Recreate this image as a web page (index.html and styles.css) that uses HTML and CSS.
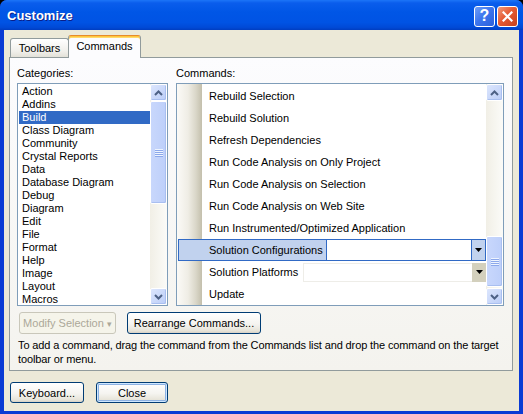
FILE: index.html
```html
<!DOCTYPE html>
<html lang="en">
<head>
  <meta charset="UTF-8">
  <title>Customize</title>
  <link rel="stylesheet" href="styles.css">
</head>
<body>
  <div class="window">
    <div class="titlebar">
      <span class="title">Customize</span>
      <div class="caption-buttons">
        <span class="cap-btn help">?</span>
        <span class="cap-btn close">
          <svg width="11" height="11" viewBox="0 0 11 11"><path d="M1.5 1.5 L9.5 9.5 M9.5 1.5 L1.5 9.5" stroke="#fff" stroke-width="2.2" stroke-linecap="square"/></svg>
        </span>
      </div>
    </div>

    <div class="client">
      <div class="tabs">
        <div class="tab">Toolbars</div>
        <div class="tab active">Commands</div>
      </div>

      <div class="panel">
        <div class="columns">
          <div class="col">
            <div class="label">Categories:</div>
            <div class="listbox">
              <ul class="cat-items">
                <li>Action</li>
                <li>Addins</li>
                <li class="selected">Build</li>
                <li>Class Diagram</li>
                <li>Community</li>
                <li>Crystal Reports</li>
                <li>Data</li>
                <li>Database Diagram</li>
                <li>Debug</li>
                <li>Diagram</li>
                <li>Edit</li>
                <li>File</li>
                <li>Format</li>
                <li>Help</li>
                <li>Image</li>
                <li>Layout</li>
                <li>Macros</li>
              </ul>
              <div class="scrollbar">
                <div class="sb-btn">
                  <svg width="9" height="6" viewBox="0 0 9 6"><path d="M1 5 L4.5 1.5 L8 5" fill="none" stroke="#4D6185" stroke-width="2"/></svg>
                </div>
                <div class="sb-thumb cat-thumb"><span class="grip"></span></div>
                <div class="sb-track"></div>
                <div class="sb-btn">
                  <svg width="9" height="6" viewBox="0 0 9 6"><path d="M1 1 L4.5 4.5 L8 1" fill="none" stroke="#4D6185" stroke-width="2"/></svg>
                </div>
              </div>
            </div>
          </div>

          <div class="col">
            <div class="label">Commands:</div>
            <div class="listbox">
              <ul class="cmd-items">
                <li>Rebuild Selection</li>
                <li>Rebuild Solution</li>
                <li>Refresh Dependencies</li>
                <li>Run Code Analysis on Only Project</li>
                <li>Run Code Analysis on Selection</li>
                <li>Run Code Analysis on Web Site</li>
                <li>Run Instrumented/Optimized Application</li>
                <li class="combo-row selected">
                  <span class="cmd-label wide">Solution Configurations</span>
                  <span class="combo-field"></span>
                  <span class="combo-drop">
                    <svg width="7" height="4" viewBox="0 0 7 4"><path d="M0 0 H7 L3.5 4 Z" fill="#000"/></svg>
                  </span>
                </li>
                <li class="combo-row">
                  <span class="cmd-label narrow">Solution Platforms</span>
                  <span class="combo-field plain"></span>
                  <span class="combo-drop khaki">
                    <svg width="7" height="4" viewBox="0 0 7 4"><path d="M0 0 H7 L3.5 4 Z" fill="#000"/></svg>
                  </span>
                </li>
                <li>Update</li>
              </ul>
              <div class="scrollbar">
                <div class="sb-btn">
                  <svg width="9" height="6" viewBox="0 0 9 6"><path d="M1 5 L4.5 1.5 L8 5" fill="none" stroke="#4D6185" stroke-width="2"/></svg>
                </div>
                <div class="sb-track cmd-track"></div>
                <div class="sb-thumb cmd-thumb"><span class="grip"></span></div>
                <div class="sb-track"></div>
                <div class="sb-btn">
                  <svg width="9" height="6" viewBox="0 0 9 6"><path d="M1 1 L4.5 4.5 L8 1" fill="none" stroke="#4D6185" stroke-width="2"/></svg>
                </div>
              </div>
            </div>
          </div>
        </div>

        <div class="actions">
          <button class="btn disabled modify">Modify Selection <span class="caret">&#9662;</span></button>
          <button class="btn rearrange">Rearrange Commands...</button>
        </div>

        <p class="hint">To add a command, drag the command from the Commands list and drop the command on the target<br>toolbar or menu.</p>
      </div>

      <div class="footer">
        <button class="btn keyboard">Keyboard...</button>
        <button class="btn default close-btn">Close</button>
      </div>
    </div>
  </div>
</body>
</html>
```

FILE: styles.css
```css
* {
  box-sizing: border-box;
}

body {
  margin: 0;
  background: #000;
  font-family: 'Liberation Sans', Arial, sans-serif;
  font-size: 11px;
  color: #000;
}

.window {
  width: 523px;
  height: 414px;
  display: flex;
  flex-direction: column;
  background: #0A3BD4;
  border-radius: 7px 7px 0 0;
  overflow: hidden;
}

/* title bar */

.titlebar {
  height: 30px;
  flex: none;
  display: flex;
  align-items: center;
  padding: 0 5px 0 7px;
  background: linear-gradient(#1C75F8 0, #0A5DEC 3px, #0056E6 40%, #0053E4 75%, #0049D6 92%, #003DC0 100%);
}

.title {
  color: #fff;
  font-weight: bold;
  font-size: 13px;
  text-shadow: 1px 1px #0A1E88;
  margin-top: 1px;
}

.caption-buttons {
  margin-left: auto;
  display: flex;
  gap: 2px;
  margin-top: 2px;
}

.cap-btn {
  width: 21px;
  height: 21px;
  border: 1px solid #fff;
  border-radius: 3px;
  display: flex;
  align-items: center;
  justify-content: center;
  color: #fff;
}

.cap-btn.help {
  background: linear-gradient(135deg, #6E9EF7 0%, #3D76EE 45%, #2A5FDB 100%);
  font-weight: bold;
  font-size: 16px;
  line-height: 1;
}

.cap-btn.close {
  background: linear-gradient(135deg, #F09A7C 0%, #E55A33 45%, #C6401B 100%);
}

/* client area */

.client {
  flex: 1;
  margin: 0 4px 3px;
  padding: 5px 6px 0 5px;
  background: #ECE9D8;
}

.tabs {
  height: 22px;
  display: flex;
  align-items: flex-end;
  padding-left: 1px;
}

.tab {
  width: 59px;
  height: 19px;
  border: 1px solid #919B9C;
  border-bottom: none;
  border-radius: 3px 3px 0 0;
  background: linear-gradient(#FFFFFF, #F0EFEA 70%, #E3E1D8);
  text-align: center;
  line-height: 19px;
}

.tab.active {
  width: 73px;
  height: 23px;
  margin-left: -1px;
  margin-bottom: -1px;
  position: relative;
  z-index: 1;
  border-top: 1px solid #E68B2C;
  box-shadow: inset 0 1px #FFC73C, inset 0 2px #FFD970;
  background: #FCFCFE;
  line-height: 21px;
}

.panel {
  height: 314px;
  border: 1px solid #919B9C;
  background: linear-gradient(#FCFCFE, #F4F3EE);
  padding: 9px 8px 0 7px;
}

.columns {
  display: grid;
  grid-template-columns: 151px 328px;
  column-gap: 8px;
}

.label {
  height: 13px;
  line-height: 13px;
  margin-bottom: 3px;
}

.listbox {
  height: 223px;
  border: 1px solid #7F9DB9;
  background: #fff;
  display: flex;
}

ul {
  margin: 0;
  padding: 0;
  list-style: none;
}

.cat-items {
  flex: 1;
  padding: 1px 0 0 1px;
}

.cat-items li {
  height: 13px;
  line-height: 13px;
  padding-left: 3px;
  white-space: nowrap;
}

.cat-items li.selected {
  background: #316AC5;
  color: #fff;
}

.cmd-items {
  flex: 1;
  padding-top: 1px;
  background: linear-gradient(to right, #FBFAF7 0, #EFEDE5 11px, #D9D6C8 19px, #C3BFAC 25px, #fff 25px);
}

.cmd-items li {
  height: 22px;
  line-height: 22px;
  padding-left: 32px;
  white-space: nowrap;
}

.cmd-items li.combo-row {
  display: flex;
  align-items: center;
  padding-left: 0;
}

.cmd-label {
  height: 100%;
  padding-left: 32px;
}

.cmd-label.narrow {
  width: 126px;
}

.combo-field {
  flex: 1;
  align-self: stretch;
  background: #fff;
}

.combo-field.plain {
  align-self: auto;
  height: 19px;
  border: 1px solid #EEEDE8;
  border-right: none;
}

.combo-drop {
  width: 14px;
  display: flex;
  align-items: center;
  justify-content: center;
  align-self: stretch;
}

.combo-drop.khaki {
  align-self: auto;
  height: 19px;
  background: #D3D0BD;
}

.cmd-items li.selected {
  margin-left: 1px;
  border: 1px solid #316AC5;
  background: #C1D2EE;
}

.selected .cmd-label.wide {
  width: 148px;
  padding-left: 30px;
  border-right: 1px solid #316AC5;
  line-height: 20px;
}

.selected .combo-drop {
  border-left: 1px solid #316AC5;
  background: #C1D2EE;
}

/* scrollbars */

.scrollbar {
  width: 17px;
  flex: none;
  display: flex;
  flex-direction: column;
  background: linear-gradient(to right, #F1EFE6, #FBFBF8);
}

.sb-btn {
  height: 17px;
  flex: none;
  border: 1px solid #fff;
  border-radius: 2px;
  background: linear-gradient(135deg, #DCE6FD, #BBCDF7);
  box-shadow: inset -1px -1px #A9BFF0;
  display: flex;
  align-items: center;
  justify-content: center;
}

.sb-track {
  flex: 1;
}

.sb-track.cmd-track {
  flex: none;
  height: 135px;
}

.sb-thumb {
  flex: none;
  border: 1px solid #fff;
  border-radius: 2px;
  background: linear-gradient(to right, #C8D7FC, #BDCFFA);
  box-shadow: inset -1px -1px #A9BFF0;
  display: flex;
  align-items: center;
  justify-content: center;
}

.cat-thumb {
  height: 103px;
}

.cmd-thumb {
  height: 51px;
}

.grip {
  width: 8px;
  height: 8px;
  background: repeating-linear-gradient(#EEF4FE 0, #EEF4FE 1px, #8CA8EB 1px, #8CA8EB 2px);
}

/* buttons */

.btn {
  font-family: inherit;
  font-size: 11px;
  color: #000;
  height: 22px;
  padding: 0;
  border: 1px solid #003C74;
  border-radius: 3px;
  background: linear-gradient(#FFFFFF, #F5F4F0 55%, #E6E3D8 90%, #D6D0C5);
}

.actions {
  display: flex;
  gap: 11px;
  margin-top: 6px;
  padding-left: 2px;
}

.btn.disabled {
  border-color: #C9C7BA;
  color: #ACA899;
  background: #F5F4EA;
}

.modify {
  width: 97px;
}

.caret {
  font-size: 9px;
}

.rearrange {
  width: 134px;
}

.hint {
  margin: 4px 0 0 1px;
  line-height: 14px;
  letter-spacing: -0.12px;
  white-space: nowrap;
}

.footer {
  display: flex;
  gap: 12px;
  margin-top: 11px;
  padding-left: 1px;
}

.footer .btn {
  height: 21px;
}

.keyboard {
  width: 74px;
}

.close-btn {
  width: 72px;
}

.btn.default {
  box-shadow: inset 0 0 0 1px #CEE7FF, inset 0 0 0 2px #8DB2E3;
}
```
